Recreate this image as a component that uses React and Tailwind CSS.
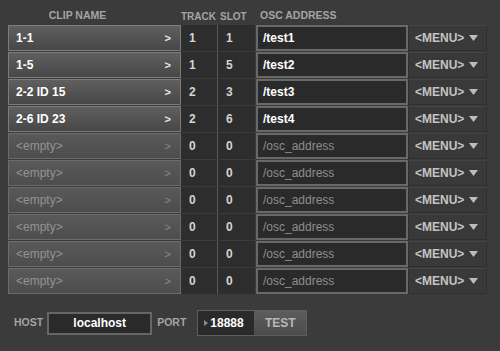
const clips = [
  { name: "1-1", track: 1, slot: 1, osc: "/test1" },
  { name: "1-5", track: 1, slot: 5, osc: "/test2" },
  { name: "2-2 ID 15", track: 2, slot: 3, osc: "/test3" },
  { name: "2-6 ID 23", track: 2, slot: 6, osc: "/test4" },
  { name: null, track: 0, slot: 0, osc: null },
  { name: null, track: 0, slot: 0, osc: null },
  { name: null, track: 0, slot: 0, osc: null },
  { name: null, track: 0, slot: 0, osc: null },
  { name: null, track: 0, slot: 0, osc: null },
  { name: null, track: 0, slot: 0, osc: null },
];

const ClipRow = ({ clip }) => {
  const empty = clip.name === null;
  return (
    <div className="flex h-[26px]">
      <div
        className={
          empty
            ? "flex w-[173px] items-center justify-between border border-[#6c6c6c] bg-gradient-to-b from-[#595959] to-[#4d4d4d] pl-[7px] pr-[9px]"
            : "flex w-[173px] items-center justify-between border border-[#7c7c7c] bg-gradient-to-b from-[#5f5f5f] to-[#474747] pl-[7px] pr-[9px]"
        }
      >
        <span
          className={
            empty
              ? "text-[12px] text-[#939393]"
              : "text-[12px] font-bold text-white"
          }
        >
          {empty ? "<empty>" : clip.name}
        </span>
        <span
          className={
            empty
              ? "text-[11px] text-[#8a8a8a]"
              : "text-[11px] font-bold text-[#e8e8e8]"
          }
        >
          &gt;
        </span>
      </div>
      <div className="flex w-[37px] items-center border-r border-[#5a5a5a] bg-[#2d2d2d] pl-[8px] text-[12px] font-bold text-[#d4d4d4]">
        {clip.track}
      </div>
      <div className="flex w-[37px] items-center bg-[#2d2d2d] pl-[8px] text-[12px] font-bold text-[#d4d4d4]">
        {clip.slot}
      </div>
      <div className="ml-[1px] flex w-[152px] items-center border-2 border-[#686868] bg-[#2a2a2a] pl-[5px]">
        <span
          className={
            empty
              ? "text-[12px] text-[#8e8e8e]"
              : "text-[12px] font-bold text-white"
          }
        >
          {empty ? "/osc_address" : clip.osc}
        </span>
      </div>
      <div className="flex w-[79px] items-center gap-[5px] border border-[#2f2f2f] border-t-[#444444] bg-[#393939] pl-[6px]">
        <span className="text-[12px] font-bold text-[#c4c4c4]">&lt;MENU&gt;</span>
        <svg width="9" height="6" viewBox="0 0 9 6">
          <path d="M0 0h9L4.5 6z" fill="#bdbdbd" />
        </svg>
      </div>
    </div>
  );
};

const App = () => {
  return (
    <div
      className="h-[351px] w-[500px] bg-[#3b3b3b] pl-[8px] pt-[7px]"
      style={{ fontFamily: '"Liberation Sans", Arial, sans-serif' }}
    >
      <div className="flex h-[18px] items-center text-[10.5px] font-bold text-[#a4a4a4]">
        <div className="w-[173px] pr-[34px] text-center">CLIP NAME</div>
        <div className="flex w-[74px] gap-[4px] text-[10px]">
          <span>TRACK</span>
          <span>SLOT</span>
        </div>
        <div className="pl-[5px]">OSC ADDRESS</div>
      </div>
      <div className="flex flex-col gap-[1px]">
        {clips.map((clip, i) => (
          <ClipRow key={i} clip={clip} />
        ))}
      </div>
      <div className="mt-[16px] flex items-center">
        <span className="ml-[6px] text-[10.5px] font-bold text-[#a4a4a4]">HOST</span>
        <div className="ml-[4px] flex h-[23px] w-[105px] items-center justify-center border-2 border-[#666666] bg-[#2a2a2a] text-[12px] font-bold text-white">
          localhost
        </div>
        <span className="ml-[5px] text-[10.5px] font-bold text-[#a4a4a4]">PORT</span>
        <div className="ml-[11px] flex h-[26px] border border-[#5e5e5e]">
          <div className="flex w-[56px] items-center bg-[#2a2a2a] pl-[6px] text-[12px] font-bold text-white">
            <svg width="4" height="6" viewBox="0 0 4 6" className="mr-[2px]">
              <path d="M0 0l4 3-4 3z" fill="#8a8a8a" />
            </svg>
            18888
          </div>
          <div className="flex w-[52px] items-center justify-center bg-gradient-to-b from-[#5d5d5d] to-[#4c4c4c] text-[12px] font-bold text-[#b8b8b8]">
            TEST
          </div>
        </div>
      </div>
    </div>
  );
};

export default App;
